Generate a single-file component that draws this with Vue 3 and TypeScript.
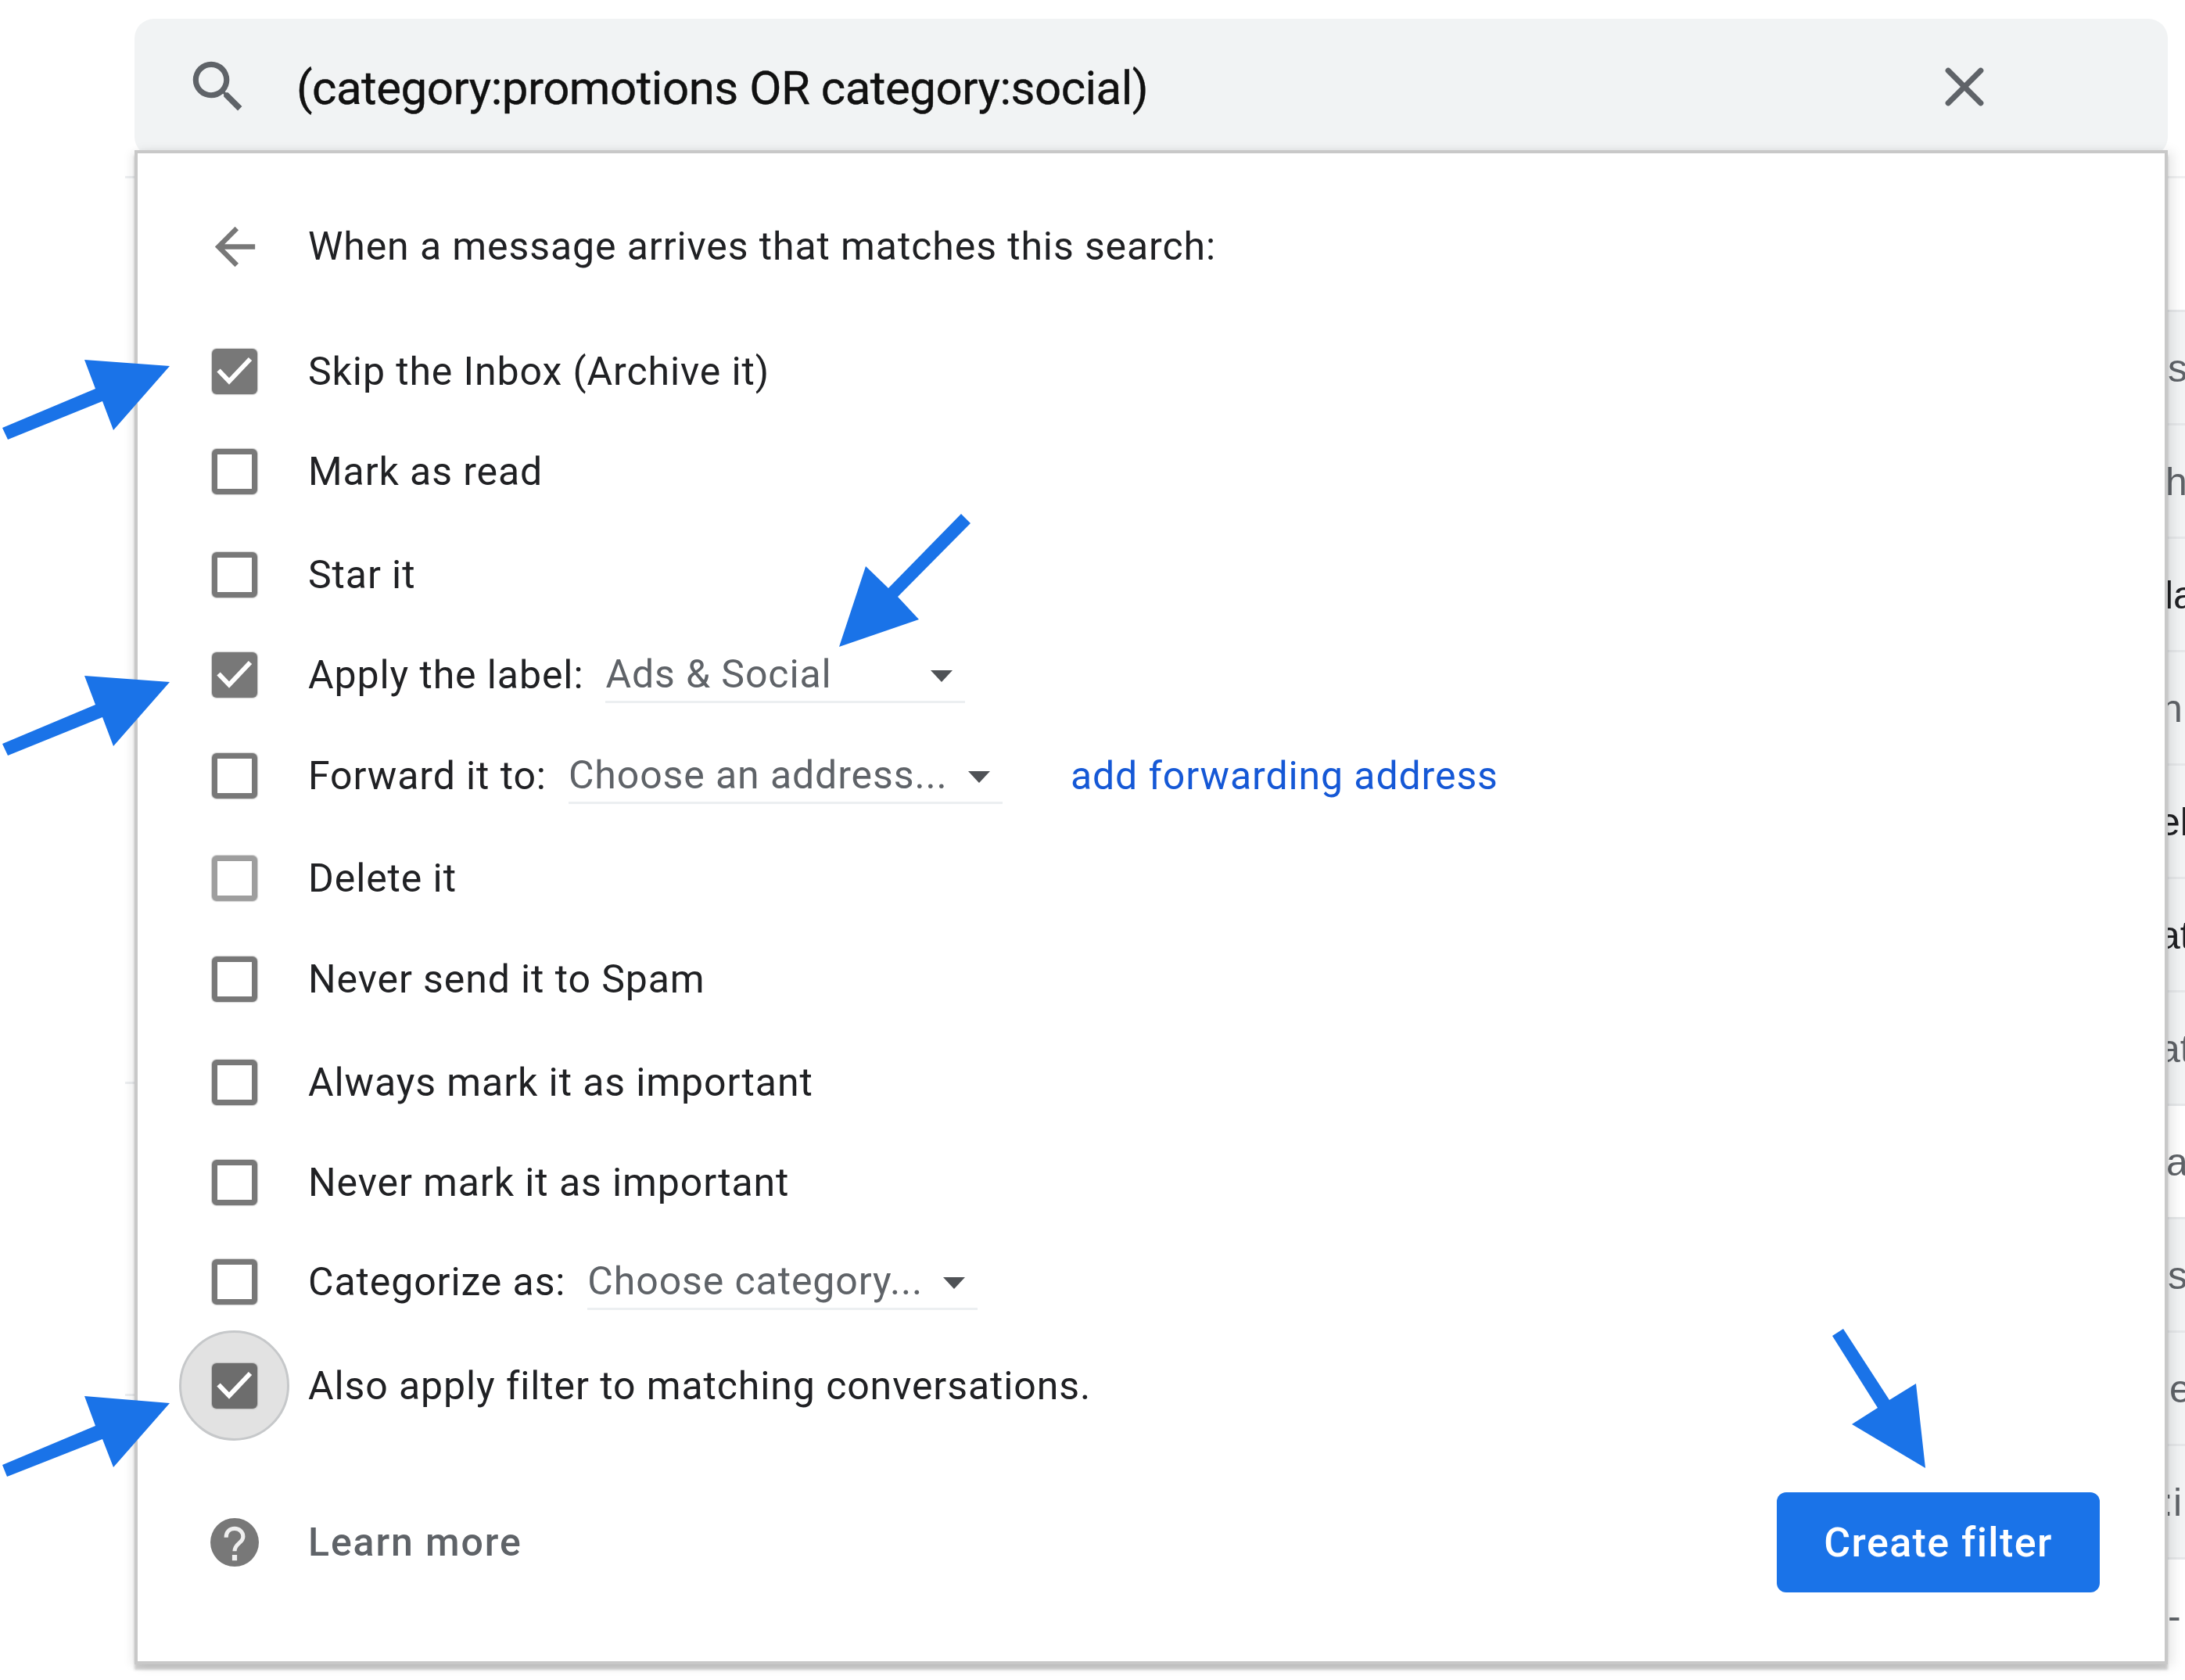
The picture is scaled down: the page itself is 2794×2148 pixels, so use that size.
<script setup lang="ts">
interface Row {
  label: string;
  gap: number;
  checked?: boolean;
  faint?: boolean;
  focus?: boolean;
  select?: { text: string; cls: string };
  link?: string;
}
const rows: Row[] = [
  { label: 'Skip the Inbox (Archive it)', gap: 100, checked: true },
  { label: 'Mark as read', gap: 68 },
  { label: 'Star it', gap: 72 },
  { label: 'Apply the label:', gap: 68, checked: true, select: { text: 'Ads & Social', cls: 'sel-label' } },
  { label: 'Forward it to:', gap: 69, select: { text: 'Choose an address...', cls: 'sel-forward' }, link: 'add forwarding address' },
  { label: 'Delete it', gap: 71, faint: true },
  { label: 'Never send it to Spam', gap: 69 },
  { label: 'Always mark it as important', gap: 72 },
  { label: 'Never mark it as important', gap: 68 },
  { label: 'Categorize as:', gap: 67, select: { text: 'Choose category...', cls: 'sel-cat' } },
  { label: 'Also apply filter to matching conversations.', gap: 73, checked: true, focus: true },
];
const strip = [
  { t: 's', x: 0, c: 'tone-mid', read: true },
  { t: 'h', x: -3, c: 'tone-mid', read: true },
  { t: 'la', x: -4, c: 'tone-dark', read: true },
  { t: 'n', x: -9, c: 'tone-mid', read: true },
  { t: 'el', x: -12, c: 'tone-dark', read: true },
  { t: 'at', x: -12, c: 'tone-dark', read: true },
  { t: 'at', x: -12, c: 'tone-mid', read: true },
  { t: 'a', x: -2, c: 'tone-mid', read: false },
  { t: 's', x: 0, c: 'tone-mid', read: true },
  { t: 'e', x: 2, c: 'tone-mid', read: true },
  { t: ':i', x: -7, c: 'tone-mid', read: true },
  { t: '-', x: 0, c: 'tone-mid', read: false },
];
const arrows = [
  '3,547 122,497 108,460 217,468 145,550 131,513 10,562',
  '3,951 122,901 108,864 217,872 145,954 131,917 10,966',
  '3,1873 122,1823 108,1785 217,1794 145,1876 131,1840 9,1888',
  '1229,657 1241,669 1148,763 1175,792 1073,827 1107,724 1136,752',
  '2357,1699 2343,1708 2401,1800 2368,1821 2462,1877 2450,1769 2416,1790',
];
</script>

<template>
  <div class="page">
    <div class="main">
      <div class="search">
        <svg class="ico" viewBox="0 0 24 24"><path fill="#5f6368" d="M15.5 14h-.79l-.28-.27A6.47 6.47 0 0 0 16 9.5 6.5 6.5 0 1 0 9.5 16c1.61 0 3.09-.59 4.23-1.57l.27.28v.79l5 4.99L20.49 19l-4.99-5zm-6 0C7.01 14 5 11.99 5 9.5S7.01 5 9.5 5 14 7.01 14 9.5 11.99 14 9.5 14z"/></svg>
        <span class="query">(category:promotions OR category:social)</span>
        <svg class="ico close" viewBox="0 0 24 24"><path d="M6.2 6.2 17.8 17.8M17.8 6.2 6.2 17.8" stroke="#5f6368" stroke-width="2" stroke-linecap="round" fill="none"/></svg>
      </div>
      <div class="panel">
        <div class="head">
          <div class="lead">
            <svg class="back" viewBox="0 0 24 24"><path fill="#787878" d="M20 11H7.83l5.59-5.59L12 4l-8 8 8 8 1.41-1.41L7.83 13H20v-2z"/></svg>
          </div>
          <span class="txt">When a message arrives that matches this search:</span>
        </div>
        <div
          v-for="r in rows"
          :key="r.label"
          class="row"
          :style="{ marginTop: r.gap + 'px' }"
        >
          <div class="lead" :class="{ focus: r.focus }">
            <div class="box" :class="{ on: r.checked, faint: r.faint, deep: r.focus }">
              <svg v-if="r.checked" class="tick" viewBox="0 0 58 58"><path d="M8.5 27.5 22 41.5 49 13" stroke="#fff" stroke-width="6" fill="none"/></svg>
            </div>
          </div>
          <span class="txt">{{ r.label }}</span>
          <div v-if="r.select" class="sel" :class="r.select.cls">
            <span>{{ r.select.text }}</span>
            <i class="caret"></i>
          </div>
          <a v-if="r.link" class="link">{{ r.link }}</a>
        </div>
        <div class="foot">
          <div class="lead">
            <svg class="help" viewBox="0 0 60 60">
              <circle cx="30" cy="30" r="30" fill="#787878"/>
              <path d="M19.500 24c0-7 4.500-11 10.500-11s10.500 4 10.500 10c0 8-10.500 8-10.500 18" stroke="#efefef" stroke-width="5" fill="none"/>
              <rect x="27" y="45.500" width="6" height="7" fill="#efefef"/>
            </svg>
          </div>
          <span class="txt learn">Learn more</span>
          <button class="create">Create filter</button>
        </div>
      </div>
    </div>
    <div class="strip">
      <div class="strip-top"></div>
      <div
        v-for="(s, i) in strip"
        :key="i"
        class="strip-row"
        :class="[s.c, { read: s.read }]"
      >
        <span :style="{ marginLeft: s.x + 'px' }">{{ s.t }}</span>
      </div>
    </div>
    <div class="gutter tick-a"></div>
    <div class="gutter tick-b"></div>
    <div class="gutter tick-c"></div>
    <svg class="arrows" viewBox="0 0 2794 2148">
      <polygon v-for="p in arrows" :key="p" :points="p" fill="#1a73e8"/>
    </svg>
  </div>
</template>

<style>
html, body { margin: 0; background: #fff; }
</style>

<style scoped>
.page {
  position: relative;
  width: 2794px;
  height: 2148px;
  overflow: hidden;
  display: flex;
  padding: 24px 0 0 172px;
  box-sizing: border-box;
  background: #fff;
  font-family: Roboto, "Liberation Sans", sans-serif;
  color: #202124;
}
.main {
  position: relative;
  z-index: 2;
  width: 2600px;
  flex: none;
  display: flex;
  flex-direction: column;
}
.search {
  height: 176px;
  margin-bottom: -8px;
  box-sizing: border-box;
  padding: 0 217px 3px 64px;
  background: #f1f3f4;
  border-radius: 25px;
  display: flex;
  align-items: center;
}
.ico { width: 86px; height: 86px; flex: none; }
.close { margin-left: auto; }
.query {
  margin-left: 57px;
  padding-top: 3px;
  font-size: 60px;
  letter-spacing: -0.5px;
  color: #111;
  -webkit-text-stroke: 0.4px #111;
  white-space: nowrap;
}
.panel {
  position: relative;
  height: 1936px;
  box-sizing: border-box;
  background: #fff;
  border: 4px solid #c8c8c8;
  padding: 89px 83px 0 94px;
  box-shadow: 0 7px 3px 0 rgba(0, 0, 0, 0.18), -6px 2px 10px rgba(0, 0, 0, 0.05), 6px 2px 14px rgba(0, 0, 0, 0.1);
}
.head, .row, .foot { display: flex; align-items: center; height: 60px; }
.lead {
  position: relative;
  width: 60px;
  height: 60px;
  flex: none;
  display: flex;
  align-items: center;
  justify-content: center;
}
.back { width: 77px; height: 77px; flex: none; }
.help { width: 62px; height: 62px; flex: none; }
.txt {
  margin-left: 64px;
  font-size: 50px;
  letter-spacing: 0.9px;
  white-space: nowrap;
  line-height: 60px;
  color: #202124;
}
.box {
  position: relative;
  width: 58px;
  height: 58px;
  flex: none;
  box-sizing: border-box;
  border: 7.5px solid #787878;
  border-radius: 6px;
  background: #fff;
  box-shadow: 0 0 1px 1px rgba(120, 120, 120, 0.35);
}
.box.on { background: #787878; border: 0; }
.box.faint { border-color: #9e9e9e; }
.box.deep { background: #6d6d6d; }
.tick { position: absolute; inset: 0; display: block; }
.focus::before {
  content: "";
  position: absolute;
  left: -41px;
  top: -41px;
  width: 141px;
  height: 141px;
  box-sizing: border-box;
  border: 3px solid #c6c8ca;
  border-radius: 50%;
  background: #e2e2e2;
}
.sel {
  margin-left: 28px;
  height: 72px;
  box-sizing: border-box;
  display: flex;
  align-items: center;
  border-bottom: 3px solid #eceff1;
  font-size: 50px;
  letter-spacing: 0.9px;
  color: #5f6368;
  white-space: nowrap;
}
.sel-label { width: 460px; }
.sel-forward { width: 555px; }
.sel-cat { width: 499px; }
.caret {
  margin-left: auto;
  margin-right: 16px;
  margin-top: 5px;
  width: 0;
  height: 0;
  border-left: 14px solid transparent;
  border-right: 14px solid transparent;
  border-top: 15px solid #4f5256;
}
.link {
  margin-left: 87px;
  font-size: 50px;
  letter-spacing: 0.9px;
  color: #1558d6;
  white-space: nowrap;
}
.foot { height: 128px; margin-top: 106px; }
.learn { font-weight: 500; color: #5f6368; letter-spacing: 1.9px; }
.create {
  margin-left: auto;
  width: 413px;
  height: 128px;
  border: 0;
  border-radius: 12px;
  background: #1a73e8;
  color: #fff;
  font-family: Roboto, "Liberation Sans", sans-serif;
  font-size: 52px;
  font-weight: 500;
  letter-spacing: 1.4px;
  padding: 0;
}
.strip {
  flex: 1;
  margin-top: 201px;
  min-width: 0;
  overflow: hidden;
}
.strip-top { height: 171px; border-top: 3px solid #f0f1f2; box-sizing: border-box; }
.strip-row {
  height: 145px;
  box-sizing: border-box;
  border-top: 3px solid #e6e8ea;
  display: flex;
  align-items: center;
  padding-top: 2px;
  font-family: "Liberation Sans", Arial, sans-serif;
  font-size: 50px;
  white-space: nowrap;
  overflow: hidden;
}
.strip-row.read { background: #f2f4f5; }
.tone-mid { color: #5f6368; }
.tone-dark { color: #202124; }
.gutter { position: absolute; left: 160px; width: 12px; height: 3px; background: #eceef0; }
.tick-a { top: 225px; }
.tick-b { top: 1383px; }
.tick-c { top: 1782px; }
.arrows {
  position: absolute;
  left: 0;
  top: 0;
  width: 2794px;
  height: 2148px;
  z-index: 3;
  pointer-events: none;
}
</style>
